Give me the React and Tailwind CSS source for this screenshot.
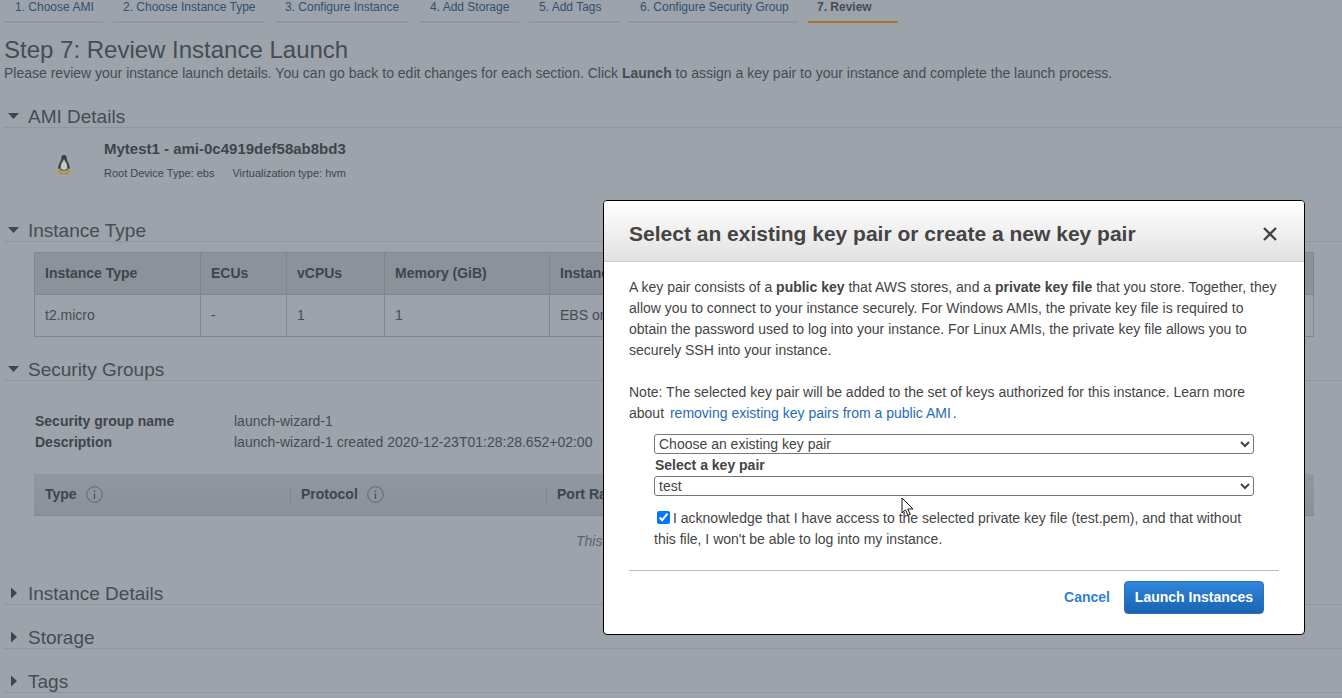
import React from "react";

const tabs = [
  ["1. Choose AMI", "w-[99px] pl-[11px]"],
  ["2. Choose Instance Type", "w-[152px] pl-[10px]"],
  ["3. Configure Instance", "w-[134px] pl-[10px]"],
  ["4. Add Storage", "w-[100px] pl-[11px]"],
  ["5. Add Tags", "w-[90px] pl-[10px]"],
  ["6. Configure Security Group", "w-[169px] pl-[11px]"],
];

function Caret({ open }) {
  return (
    <svg width="12" height="12" viewBox="0 0 12 12" className="shrink-0">
      {open ? <path d="M1 3h11L6.500 9z" fill="#3f454c" /> : <path d="M4 .5l6 5.500-6 5.500z" fill="#3f454c" />}
    </svg>
  );
}

function Section({ title, open, className = "" }) {
  return (
    <div className={`flex items-end h-[24px] border-b border-[#90979e] pl-[3px] ${className}`}>
      <div className="w-[20px] flex justify-start self-center mt-[1px]"><Caret open={open} /></div>
      <span className="text-[19px] leading-[20px] text-[#464c53] ml-[1px]">{title}</span>
    </div>
  );
}

function Info() {
  return (
    <svg width="17" height="17" viewBox="0 0 17 17" className="ml-[9px]">
      <circle cx="8.5" cy="8.5" r="7.8" fill="none" stroke="#5f666d" strokeWidth="1" />
      <path d="M8.5 7.500v5.500M8.500 4.300v1.400" stroke="#4b5158" strokeWidth="1.300" />
    </svg>
  );
}

function Tux() {
  return (
    <svg width="16" height="21" viewBox="0 0 18 24">
      <path d="M9 1c-2.400 0-3.400 2-3.200 4.400C5.900 8 2.600 11 2.400 15.500c-.1 2 1 3.500 6.600 3.500s6.700-1.500 6.600-3.500C15.400 11 12.100 8 12.200 5.400 12.400 3 11.400 1 9 1z" fill="#3b4045" />
      <path d="M9 7.500c-2 1-3.800 4.200-3.800 7.500 0 2 1.500 3.200 3.800 3.200s3.800-1.200 3.800-3.200c0-3.300-1.800-6.500-3.800-7.500z" fill="#c4c8cc" />
      <path d="M7 6.500h4L9 8.300z" fill="#c2a344" />
      <path d="M1 19.500l3-3.500 3 4.500-3 2.500zM17 19.500L14 16l-3 4.500 3 2.500z" fill="#b99a3e" />
      <path d="M4.500 23h3.500l1-2H5zM13.500 23H10l-1-2h4z" fill="#a98d3a" />
    </svg>
  );
}

export default function App() {
  return (
    <div className="relative h-[698px] w-[1342px] overflow-hidden bg-[#9ca3aa] text-[#464c53] text-[14px]" style={{ fontFamily: '"Liberation Sans", Arial, sans-serif' }}>
      {/* wizard tabs */}
      <div className="flex gap-[10px] pl-[4px] h-[23px]">
        {tabs.map(([t, w]) => (
          <div key={t} className={`${w} h-[23px] border-b-[2px] border-[#8f969d] text-[12px] leading-[15px] text-[#33506e]`}>{t}</div>
        ))}
        <div className="w-[90px] pl-[9px] h-[23px] border-b-[2px] border-[#a8742f] text-[12px] leading-[15px] font-bold text-[#464c53]">7. Review</div>
      </div>

      {/* title */}
      <div className="pl-[4px]">
        <h1 className="mt-[13px] text-[24px] leading-[28px] text-[#464c53]">Step 7: Review Instance Launch</h1>
        <p className="text-[14px] leading-[17px] mt-[1px] text-[#464c53]">
          Please review your instance launch details. You can go back to edit changes for each section. Click <b>Launch</b> to assign a key pair to your instance and complete the launch process.
        </p>
      </div>

      {/* AMI */}
      <div className="pl-[4px] mt-[22px]">
        <Section title="AMI Details" open />
        <div className="flex h-[79px]">
          <div className="w-[100px] pl-[52px] pt-[26px]"><Tux /></div>
          <div>
            <div className="mt-[11px] text-[15px] leading-[20px] font-bold text-[#3f454c]">Mytest1 - ami-0c4919def58ab8bd3</div>
            <div className="mt-[7px] text-[11px] leading-[14px] flex gap-[18px] text-[#3f454c]">
              <span>Root Device Type: ebs</span>
              <span>Virtualization type: hvm</span>
            </div>
          </div>
        </div>
      </div>

      {/* Instance type */}
      <div className="pl-[4px] mt-[11px]">
        <Section title="Instance Type" open />
        <div className="ml-[30px] mt-[10px] w-[1280px] h-[85px] border border-[#7f868d] text-[14px]">
          <div className="flex h-[42px] bg-[#8b9299] border-b border-[#7f868d] font-bold text-[#3f454c]">
            <div className="w-[166px] border-r border-[#7f868d] pl-[10px] leading-[41px]">Instance Type</div>
            <div className="w-[86px] border-r border-[#7f868d] pl-[10px] leading-[41px]">ECUs</div>
            <div className="w-[98px] border-r border-[#7f868d] pl-[10px] leading-[41px]">vCPUs</div>
            <div className="w-[165px] border-r border-[#7f868d] pl-[10px] leading-[41px]">Memory (GiB)</div>
            <div className="pl-[10px] leading-[41px]">Instance Storage (GB)</div>
          </div>
          <div className="flex h-[41px] text-[#464c53]">
            <div className="w-[166px] border-r border-[#7f868d] pl-[10px] leading-[41px]">t2.micro</div>
            <div className="w-[86px] border-r border-[#7f868d] pl-[10px] leading-[41px]">-</div>
            <div className="w-[98px] border-r border-[#7f868d] pl-[10px] leading-[41px]">1</div>
            <div className="w-[165px] border-r border-[#7f868d] pl-[10px] leading-[41px]">1</div>
            <div className="pl-[10px] leading-[41px]">EBS only</div>
          </div>
        </div>
      </div>

      {/* Security groups */}
      <div className="pl-[4px] mt-[20px]">
        <Section title="Security Groups" open />
        <div className="ml-[31px] mt-[30px] text-[14px] leading-[21px]">
          <div className="flex"><b className="w-[199px] text-[#3f454c]">Security group name</b><span>launch-wizard-1</span></div>
          <div className="flex"><b className="w-[199px] text-[#3f454c]">Description</b><span>launch-wizard-1 created 2020-12-23T01:28:28.652+02:00</span></div>
        </div>
        <div className="ml-[30px] mt-[21px] w-[1280px] h-[42px] flex items-center font-bold text-[#3f454c] bg-gradient-to-b from-[#90979e] to-[#8a9198] border-b border-[#7f868d]">
          <div className="w-[257px] pl-[11px] flex items-center h-[16px] border-r border-[#7f868d]">Type<Info /></div>
          <div className="w-[256px] pl-[10px] flex items-center h-[16px] border-r border-[#7f868d]">Protocol<Info /></div>
          <div className="pl-[10px]">Port Range</div>
        </div>
        <div className="mt-[17px] ml-[30px] pl-[542px] text-[14px] leading-[17px] italic text-[#5d646b]">This</div>
      </div>

      {/* collapsed */}
      <div className="pl-[4px] mt-[31px]">
        <Section title="Instance Details" />
        <Section title="Storage" className="mt-[20px]" />
        <Section title="Tags" className="mt-[20px]" />
      </div>

      {/* modal */}
      <div className="absolute left-[603px] top-[200px] w-[702px] h-[435px] bg-white border border-black rounded-[4px] overflow-hidden text-[#444]">
        <div className="flex items-center justify-between h-[61px] pt-[6px] pl-[25px] pr-[26px] border-b border-[#ccc] bg-gradient-to-b from-white to-[#e1e1e1]">
          <h2 className="text-[21px] leading-[24px] font-bold text-[#444]">Select an existing key pair or create a new key pair</h2>
          <svg width="16" height="16" viewBox="0 0 16 16"><path d="M2 2l12 12M14 2L2 14" stroke="#444" strokeWidth="2.400" fill="none" /></svg>
        </div>
        <div className="px-[25px] pt-[15px] text-[14px] leading-[21px]">
          <p>
            A key pair consists of a <b>public key</b> that AWS stores, and a <b>private key file</b> that you store. Together, they
            <br />allow you to connect to your instance securely. For Windows AMIs, the private key file is required to
            <br />obtain the password used to log into your instance. For Linux AMIs, the private key file allows you to
            <br />securely SSH into your instance.
          </p>
          <p className="mt-[21px]">
            Note: The selected key pair will be added to the set of keys authorized for this instance. Learn more
            <br />about <a className="ml-[2px] text-[#1f6bb8]">removing existing key pairs from a public AMI</a><span className="ml-[2px]">.</span>
          </p>
          <div className="ml-[25px] mt-[10px] w-[600px]">
            <select className="block w-[600px] h-[20px] text-[14px] leading-[18px] border border-[#767676] rounded-[3px] bg-white text-[#444]" defaultValue="a">
              <option value="a">Choose an existing key pair</option>
            </select>
            <div className="font-bold leading-[21px] mt-[1px] ml-[1px]">Select a key pair</div>
            <select className="block w-[600px] h-[20px] text-[14px] leading-[18px] border border-[#767676] rounded-[3px] bg-white text-[#444]" defaultValue="t">
              <option value="t">test</option>
            </select>
            <div className="mt-[12px] leading-[21px]">
              <input type="checkbox" defaultChecked className="w-[13px] h-[13px] ml-[3px] mr-[3px] align-[-1px] accent-[#0075ff]" />I acknowledge that I have access to the selected private key file (test.pem), and that without
              <br />this file, I won't be able to log into my instance.
            </div>
          </div>
          <div className="mt-[20px] w-[650px] border-t border-[#bbb]"></div>
          <div className="flex justify-end items-center w-[635px] mt-[10px]">
            <span className="font-bold text-[#2f7fd6] mr-[14px]">Cancel</span>
            <button className="w-[140px] h-[33px] rounded-[4px] border border-[#2a6fb8] bg-gradient-to-b from-[#2f86da] to-[#1a63b3] text-white font-bold text-[14px]">Launch Instances</button>
          </div>
        </div>
      </div>

      {/* mouse pointer */}
      <svg className="absolute left-[901px] top-[497px]" width="14" height="20" viewBox="0 0 14 20">
        <path d="M1 1v15l3.500-3.200 2.500 5.500 2.300-1-2.500-5.300H12z" fill="#fff" stroke="#111" strokeWidth="1" />
      </svg>
    </div>
  );
}
